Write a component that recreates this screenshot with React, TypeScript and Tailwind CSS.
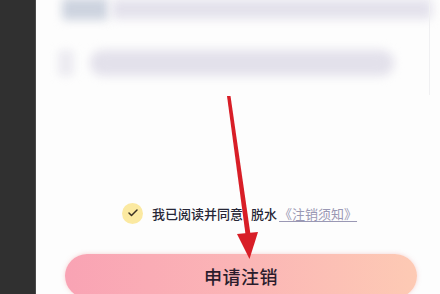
import { Check } from "lucide-react";

const Arrow = () => (
    <svg
        className="absolute left-0 top-0 pointer-events-none"
        width="404"
        height="294"
        viewBox="0 0 404 294"
    >
        {/* shaft */}
        <path d="M191 96 L194.5 96 L215 238 L210 238 Z" fill="#d81e27" />
        {/* head */}
        <path d="M201 234 L222 232 L213.5 259 Z" fill="#d81e27" />
    </svg>
);

export default function App() {
    return (
        <div
            className="w-[440px] h-[294px] flex overflow-hidden bg-white"
            style={{ fontFamily: '"Noto Sans CJK SC", "Noto Sans", sans-serif' }}
        >
            <div className="w-[36px] h-full bg-[#303030] border-r border-[#4a4a4a] shrink-0" />
            <div className="relative flex-1 h-full bg-[#fdfdfd] flex flex-col">
                {/* blurred top content */}
                <div className="flex shrink-0 items-center gap-1 ml-[26px] mt-[-4px] h-[26px]">
                    <div className="w-[46px] h-[22px] rounded bg-[#cdd3df] blur-[5px]" />
                    <div className="w-[320px] h-[20px] rounded bg-[#e4e2ec] blur-[5px]" />
                </div>
                <div className="flex shrink-0 items-center gap-4 ml-[22px] mt-[26px] h-[30px]">
                    <div className="w-[16px] h-[26px] rounded bg-[#ecebf1] blur-[4px]" />
                    <div className="w-[304px] h-[26px] rounded-full bg-[#e3e1eb] blur-[5px]" />
                </div>

                {/* agreement */}
                <div className="mt-[124px] ml-[86px] flex shrink-0 items-center h-[22px]">
                    <div className="w-[21px] h-[21px] rounded-full bg-[#fbe9a1] flex items-center justify-center">
                        <Check size={12} strokeWidth={3} color="#3a3024" />
                    </div>
                    <span className="ml-[9px] text-[13px] leading-none font-medium text-[#262636]">我已阅读并同意</span>
                    <span className="ml-[8px] text-[13px] leading-none font-medium text-[#262636]">脱水</span>
                    <span className="ml-[2px] text-[13px] leading-none text-[#9a98b4] underline underline-offset-2">
                        《注销须知》
                    </span>
                </div>

                {/* button */}
                <div className="mt-[30px] ml-[29px] w-[352px] h-[44px] shrink-0 rounded-full bg-gradient-to-r from-[#f9a3b4] via-[#fbb5b6] to-[#fdcab4] flex items-center justify-center shadow-[0_0_4px_rgba(240,170,170,0.5)]">
                    <span className="text-[18px] leading-none font-medium text-[#2a1c2c] tracking-[0.5px]">申请注销</span>
                </div>

                <div className="absolute right-[10px] top-0 w-px h-[95px] bg-[#f0f0f2]" />
                <Arrow />
            </div>
        </div>
    );
}
